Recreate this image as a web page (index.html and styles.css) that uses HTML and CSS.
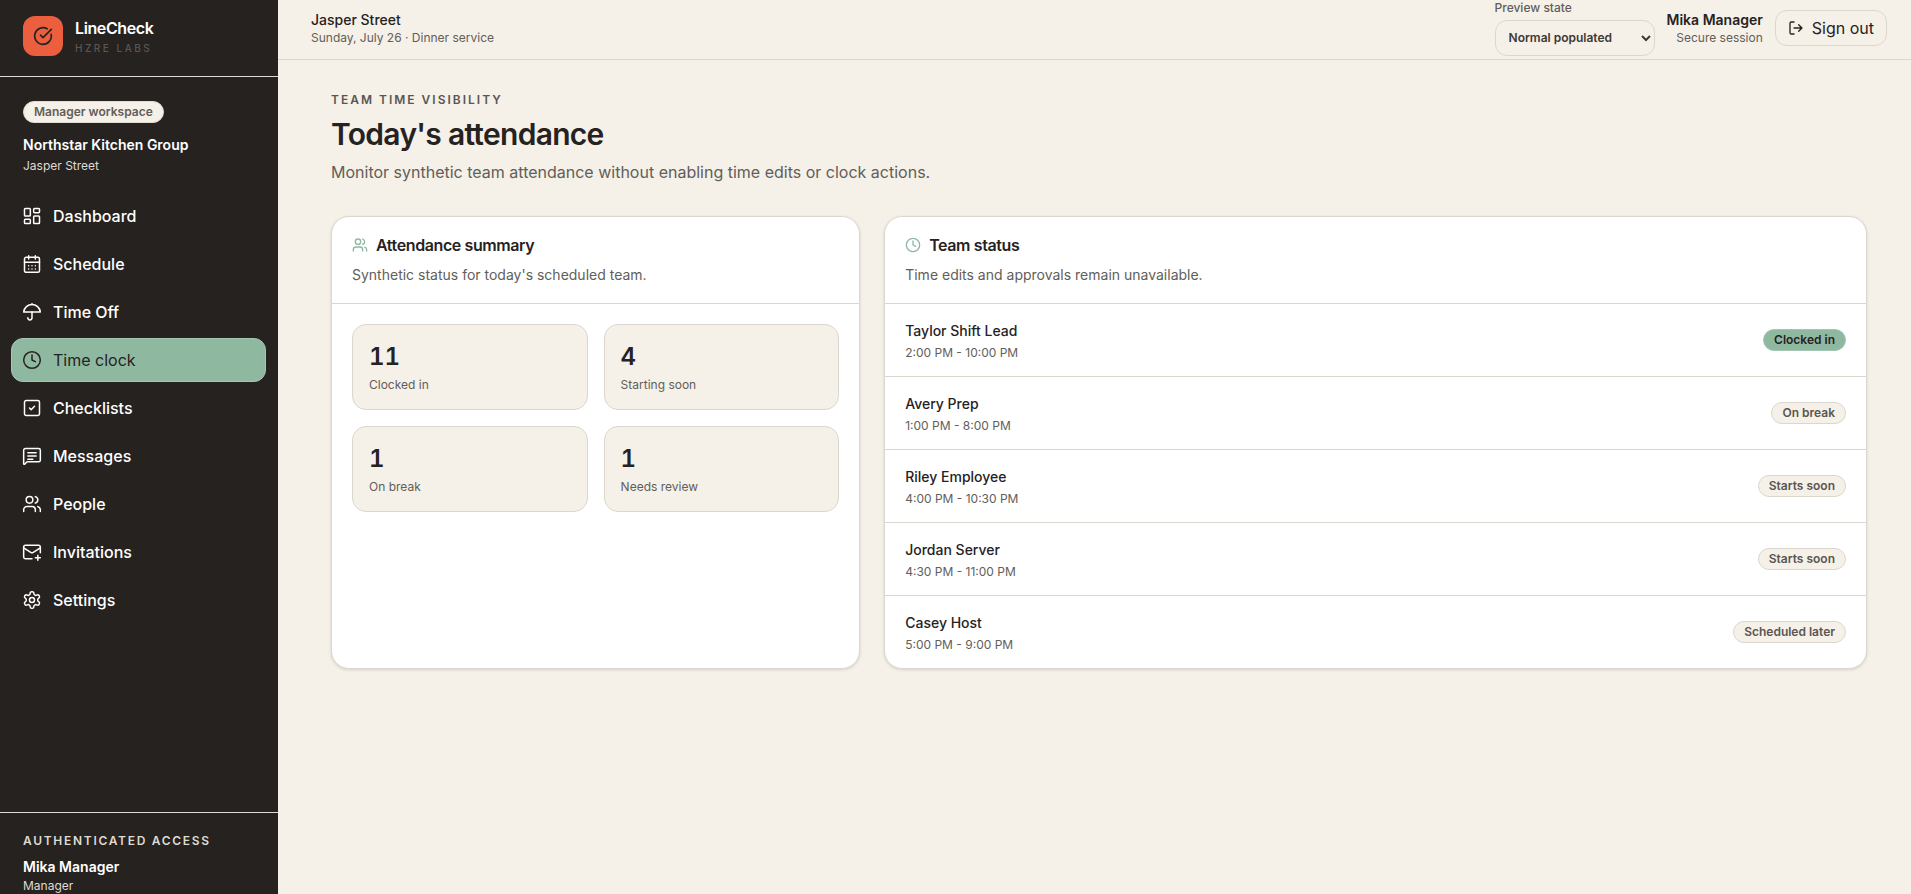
FILE: index.html
```html
<!DOCTYPE html>
<html lang="en">
<head>
<meta charset="utf-8">
<title>LineCheck - Time clock</title>
<link rel="stylesheet" href="styles.css">
</head>
<body>
<div class="app">
  <aside class="sidebar">
    <div class="brand">
      <div class="brand-mark">
        <svg viewBox="0 0 24 24" width="20" height="20" fill="none" stroke="currentColor" stroke-width="2" stroke-linecap="round" stroke-linejoin="round"><path d="M21.8 10A10 10 0 1 1 17 3.34"/><path d="m9 11 3 3L22 4"/></svg>
      </div>
      <div class="brand-text">
        <div class="brand-name">LineCheck</div>
        <div class="brand-sub">HZRE LABS</div>
      </div>
    </div>
    <div class="workspace">
      <span class="workspace-pill">Manager workspace</span>
      <div class="workspace-org">Northstar Kitchen Group</div>
      <div class="workspace-site">Jasper Street</div>
    </div>
    <nav class="nav">
      <a class="nav-item"><svg class="nav-icon" viewBox="0 0 24 24"><rect x="3" y="3" width="7" height="9" rx="1"/><rect x="14" y="3" width="7" height="5" rx="1"/><rect x="14" y="12" width="7" height="9" rx="1"/><rect x="3" y="16" width="7" height="5" rx="1"/></svg>Dashboard</a>
      <a class="nav-item"><svg class="nav-icon" viewBox="0 0 24 24"><path d="M8 2v4M16 2v4"/><rect x="3" y="4" width="18" height="18" rx="2"/><path d="M3 10h18M8 14h.01M12 14h.01M16 14h.01M8 18h.01M12 18h.01M16 18h.01"/></svg>Schedule</a>
      <a class="nav-item"><svg class="nav-icon" viewBox="0 0 24 24"><path d="M12 12v7a2.5 2.5 0 0 1-5 0"/><path d="M12 2v1"/><path d="M22 12a10.06 10.06 1 0 0-20 0Z"/></svg>Time Off</a>
      <a class="nav-item active"><svg class="nav-icon" viewBox="0 0 24 24"><circle cx="12" cy="12" r="10"/><path d="M12 6v6l4 2"/></svg>Time clock</a>
      <a class="nav-item"><svg class="nav-icon" viewBox="0 0 24 24"><rect x="3" y="3" width="18" height="18" rx="2"/><path d="m9 12 2 2 4-4"/></svg>Checklists</a>
      <a class="nav-item"><svg class="nav-icon" viewBox="0 0 24 24"><path d="M22 17a2 2 0 0 1-2 2H6.8a2 2 0 0 0-1.4.6l-2.2 2.2A.7.7 0 0 1 2 21.3V5a2 2 0 0 1 2-2h16a2 2 0 0 1 2 2z"/><path d="M7 8h10M7 12h10M7 16h6"/></svg>Messages</a>
      <a class="nav-item"><svg class="nav-icon" viewBox="0 0 24 24"><path d="M16 21v-2a4 4 0 0 0-4-4H6a4 4 0 0 0-4 4v2"/><circle cx="9" cy="7" r="4"/><path d="M22 21v-2a4 4 0 0 0-3-3.87M16 3.13a4 4 0 0 1 0 7.75"/></svg>People</a>
      <a class="nav-item"><svg class="nav-icon" viewBox="0 0 24 24"><path d="M22 13V6a2 2 0 0 0-2-2H4a2 2 0 0 0-2 2v12a2 2 0 0 0 2 2h8"/><path d="m22 7-8.97 5.7a1.94 1.94 0 0 1-2.06 0L2 7"/><path d="M19 16v6M16 19h6"/></svg>Invitations</a>
      <a class="nav-item"><svg class="nav-icon" viewBox="0 0 24 24"><path d="M12.22 2h-.44a2 2 0 0 0-2 2v.18a2 2 0 0 1-1 1.73l-.43.25a2 2 0 0 1-2 0l-.15-.08a2 2 0 0 0-2.73.73l-.22.38a2 2 0 0 0 .73 2.73l.15.1a2 2 0 0 1 1 1.72v.51a2 2 0 0 1-1 1.74l-.15.09a2 2 0 0 0-.73 2.73l.22.38a2 2 0 0 0 2.73.73l.15-.08a2 2 0 0 1 2 0l.43.25a2 2 0 0 1 1 1.73V20a2 2 0 0 0 2 2h.44a2 2 0 0 0 2-2v-.18a2 2 0 0 1 1-1.73l.43-.25a2 2 0 0 1 2 0l.15.08a2 2 0 0 0 2.73-.73l.22-.39a2 2 0 0 0-.73-2.73l-.15-.08a2 2 0 0 1-1-1.74v-.5a2 2 0 0 1 1-1.74l.15-.09a2 2 0 0 0 .73-2.73l-.22-.38a2 2 0 0 0-2.73-.73l-.15.08a2 2 0 0 1-2 0l-.43-.25a2 2 0 0 1-1-1.73V4a2 2 0 0 0-2-2z"/><circle cx="12" cy="12" r="3"/></svg>Settings</a>
    </nav>
    <div class="access">
      <div class="access-label">AUTHENTICATED ACCESS</div>
      <div class="access-name">Mika Manager</div>
      <div class="access-role">Manager</div>
    </div>
  </aside>
  <div class="shell">
    <header class="topbar">
      <div class="top-left">
        <div class="top-site">Jasper Street</div>
        <div class="top-service">Sunday, July 26 · Dinner service</div>
      </div>
      <div class="top-right">
        <label class="preview">
          <span class="preview-label">Preview state</span>
          <select class="preview-select"><option>Normal populated</option></select>
        </label>
        <div class="session">
          <div class="session-name">Mika Manager</div>
          <div class="session-note">Secure session</div>
        </div>
        <button class="signout"><svg class="signout-icon" viewBox="0 0 24 24"><path d="M9 21H5a2 2 0 0 1-2-2V5a2 2 0 0 1 2-2h4"/><path d="m16 17 5-5-5-5M21 12H9"/></svg>Sign out</button>
      </div>
    </header>
    <main class="main">
      <div class="eyebrow">TEAM TIME VISIBILITY</div>
      <h1 class="title">Today's attendance</h1>
      <p class="subtitle">Monitor synthetic team attendance without enabling time edits or clock actions.</p>
      <div class="cards">
        <section class="card">
          <div class="card-head">
            <h2 class="card-title"><svg class="card-icon" viewBox="0 0 24 24"><path d="M16 21v-2a4 4 0 0 0-4-4H6a4 4 0 0 0-4 4v2"/><circle cx="9" cy="7" r="4"/><path d="M22 21v-2a4 4 0 0 0-3-3.87M16 3.13a4 4 0 0 1 0 7.75"/></svg>Attendance summary</h2>
            <p class="card-desc">Synthetic status for today's scheduled team.</p>
          </div>
          <div class="stats">
            <div class="stat"><div class="stat-value">11</div><div class="stat-label">Clocked in</div></div>
            <div class="stat"><div class="stat-value">4</div><div class="stat-label">Starting soon</div></div>
            <div class="stat"><div class="stat-value">1</div><div class="stat-label">On break</div></div>
            <div class="stat"><div class="stat-value">1</div><div class="stat-label">Needs review</div></div>
          </div>
        </section>
        <section class="card">
          <div class="card-head">
            <h2 class="card-title"><svg class="card-icon" viewBox="0 0 24 24"><circle cx="12" cy="12" r="10"/><path d="M12 6v6l4 2"/></svg>Team status</h2>
            <p class="card-desc">Time edits and approvals remain unavailable.</p>
          </div>
          <div class="row"><div class="row-main"><div class="row-name">Taylor Shift Lead</div><div class="row-time">2:00 PM - 10:00 PM</div></div><span class="badge badge-on">Clocked in</span></div>
          <div class="row"><div class="row-main"><div class="row-name">Avery Prep</div><div class="row-time">1:00 PM - 8:00 PM</div></div><span class="badge">On break</span></div>
          <div class="row"><div class="row-main"><div class="row-name">Riley Employee</div><div class="row-time">4:00 PM - 10:30 PM</div></div><span class="badge">Starts soon</span></div>
          <div class="row"><div class="row-main"><div class="row-name">Jordan Server</div><div class="row-time">4:30 PM - 11:00 PM</div></div><span class="badge">Starts soon</span></div>
          <div class="row"><div class="row-main"><div class="row-name">Casey Host</div><div class="row-time">5:00 PM - 9:00 PM</div></div><span class="badge">Scheduled later</span></div>
        </section>
      </div>
    </main>
  </div>
</div>
</body>
</html>
```
FILE: styles.css
```css
* { box-sizing: border-box; }
html, body { margin: 0; height: 100%; overflow: hidden; }
body { font-family: Inter, "Liberation Sans", sans-serif; background: #f5f0e8; color: #26221f; }
.app { display: flex; height: 894px; }

.sidebar { width: 278px; flex: none; background: #26221f; color: #fff; display: flex; flex-direction: column; }
.brand { height: 77px; padding: 16px 23px 0; display: flex; gap: 12px; border-bottom: 1px solid #e0dbd2; }
.brand-mark { width: 40px; height: 40px; border-radius: 12px; background: #eb5f3f; color: #26221f; display: flex; align-items: center; justify-content: center; }
.brand-name { font-size: 16px; font-weight: 600; line-height: 24px; letter-spacing: -0.4px; }
.brand-sub { font-size: 10px; font-weight: 500; letter-spacing: 2.5px; line-height: 14px; color: #5a5652; margin-top: 1px; }

.workspace { padding: 23px 23px 0; }
.workspace-pill { display: inline-block; height: 22px; padding: 0 10px; border: 1px solid #e0dbd2; border-radius: 11px; background: #f5f0e8; color: #625e59; font-size: 12px; font-weight: 600; line-height: 20px; }
.workspace-org { font-size: 14px; font-weight: 600; line-height: 20px; margin-top: 12px; }
.workspace-site { font-size: 12px; line-height: 16px; margin-top: 3px; color: #dfdad2; }

.nav { margin-top: 20px; padding: 0 12px 0 11px; display: flex; flex-direction: column; gap: 4px; }
.nav-item { height: 44px; display: flex; align-items: center; gap: 11px; padding: 0 10px; border-radius: 12px; border: 1px solid transparent; font-size: 16px; font-weight: 500; color: #fff; }
.nav-icon { width: 20px; height: 20px; flex: none; fill: none; stroke: currentColor; stroke-width: 1.8; stroke-linecap: round; stroke-linejoin: round; }
.nav-item.active { background: #8fb8a1; color: #26221f; border-color: #a5c6b3; font-weight: 400; }

.access { margin-top: auto; height: 82px; padding: 20px 23px 0; border-top: 1px solid #e0dbd2; }
.access-label { font-size: 12px; font-weight: 600; letter-spacing: 1.7px; line-height: 16px; color: #dfdad2; }
.access-name { font-size: 14px; font-weight: 600; line-height: 20px; margin-top: 8px; }
.access-role { font-size: 12px; line-height: 16px; margin-top: 1px; color: #dfdad2; }

.shell { flex: 1; min-width: 0; display: flex; flex-direction: column; }
.topbar { height: 60px; flex: none; display: flex; align-items: center; justify-content: space-between; padding: 0 24px 4px 33px; border-bottom: 1px solid #dcd7ce; }
.top-site { font-size: 14px; font-weight: 500; line-height: 20px; }
.top-service { font-size: 12px; line-height: 16px; color: #625e59; }
.top-right { display: flex; align-items: center; gap: 12px; }
.preview { display: flex; flex-direction: column; width: 160px; }
.preview-label { font-size: 12px; font-weight: 500; line-height: 16px; color: #625e59; }
.preview-select { height: 36px; margin-top: 4px; padding: 0 9px; border: 1px solid #dcd7ce; border-radius: 12px; background: #f5f0e8; color: #3d3935; font-family: inherit; font-size: 12px; font-weight: 600; }
.session { text-align: right; }
.session-name { font-size: 14px; font-weight: 600; line-height: 20px; }
.session-note { font-size: 12px; line-height: 16px; color: #625e59; }
.signout { height: 36px; display: flex; align-items: center; gap: 8px; padding: 0 12px; border: 1px solid #dcd7ce; border-radius: 12px; background: #f5f0e8; color: #26221f; font-family: inherit; font-size: 16px; }
.signout-icon { width: 16px; height: 16px; fill: none; stroke: currentColor; stroke-width: 2; stroke-linecap: round; stroke-linejoin: round; }

.main { padding: 32px 44px 0 53px; }
.eyebrow { font-size: 12px; font-weight: 600; letter-spacing: 2px; line-height: 16px; color: #5a5652; }
.title { margin: 8px 0 0; font-size: 30px; font-weight: 600; line-height: 36px; letter-spacing: -0.7px; }
.subtitle { margin: 8px 0 0; font-size: 16px; line-height: 24px; color: #625e59; }
.cards { display: grid; grid-template-columns: 7fr 13fr; gap: 24px; margin-top: 32px; }
.card { background: #fff; border: 1px solid #dcd7ce; border-radius: 18px; box-shadow: 0 1px 3px rgba(38,34,31,.14); overflow: hidden; }
.card-head { height: 87px; padding: 16px 20px 0; border-bottom: 1px solid #dcd7ce; }
.card-title { margin: 0; display: flex; align-items: center; gap: 8px; font-size: 16px; font-weight: 600; line-height: 24px; letter-spacing: -0.4px; }
.card-icon { width: 16px; height: 16px; fill: none; stroke: #8fb8a1; stroke-width: 2; stroke-linecap: round; stroke-linejoin: round; }
.card-desc { margin: 8px 0 0; font-size: 14px; line-height: 20px; color: #625e59; }

.stats { display: grid; grid-template-columns: 1fr 1fr; gap: 16px; padding: 20px; }
.stat { height: 86px; padding: 16px 16px 0; background: #f5f0e8; border: 1px solid #dcd7ce; border-radius: 14px; }
.stat-value { font-size: 24px; font-weight: 600; line-height: 32px; font-variant-numeric: tabular-nums; }
.stat-label { font-size: 12px; line-height: 16px; margin-top: 4px; color: #625e59; }

.row { height: 73px; display: flex; align-items: center; justify-content: space-between; padding: 0 20px; border-bottom: 1px solid #dcd7ce; }
.row:last-child { height: 72px; border-bottom: 0; }
.row-main { padding-top: 1px; }
.row-name { font-size: 14px; font-weight: 500; line-height: 20px; }
.row-time { font-size: 12px; line-height: 16px; margin-top: 4px; color: #625e59; }
.badge { height: 22px; padding: 0 10px; border: 1px solid #dcd7ce; border-radius: 11px; background: #f5f0e8; color: #5a5652; font-size: 12px; font-weight: 600; line-height: 20px; }
.badge-on { background: #8fb8a1; color: #26221f; border-color: #a5c6b3; }
```
